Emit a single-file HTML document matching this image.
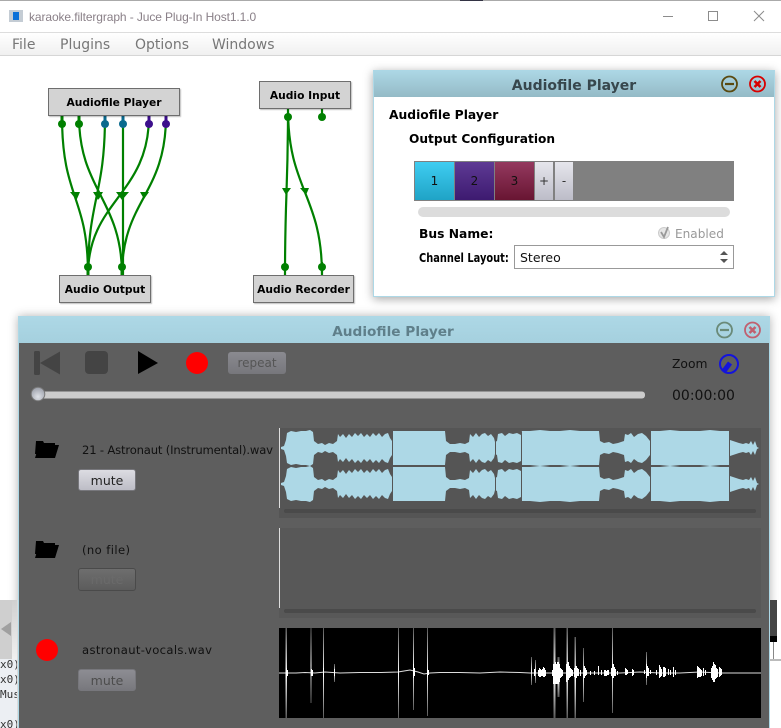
<!DOCTYPE html>
<html><head><meta charset="utf-8"><style>
html,body{margin:0;padding:0;background:#fff}
#p{position:relative;width:781px;height:728px;overflow:hidden;background:#fff;font-family:"DejaVu Sans","Liberation Sans",sans-serif}
.t{position:absolute;white-space:nowrap;line-height:1}
.b{position:absolute;box-sizing:border-box;text-align:center;white-space:nowrap}
.node{background:#d3d3d3;border:1px solid #6e6e6e;box-shadow:1px 1px 1px rgba(0,0,0,.25);font-weight:bold;font-size:10.7px;color:#000}
.mute{left:78px;width:58px;height:22px;border-radius:3px;font-size:12.5px;line-height:21px;border:1px solid #77777c}
svg{position:absolute;left:0;top:0}
</style></head><body><div id="p">
<div style="position:absolute;left:0;top:0;width:781px;height:1px;background:#aaa"></div>
<div style="position:absolute;left:460px;top:0;width:23px;height:1px;background:#334"></div>
<div style="position:absolute;left:0;top:32px;width:781px;height:24px;box-sizing:border-box;border-top:1px solid #ddd;border-bottom:1px solid #d6d6d6;background:linear-gradient(#fff,#f0f0f0)"></div>
<div class="t" style="left:29px;top:10px;font:12px 'Liberation Sans',sans-serif;color:#8a8088;letter-spacing:-.1px">karaoke.filtergraph - Juce Plug-In Host1.1.0</div>
<div class="t" style="left:12px;top:38px;font-size:14px;color:#777">File</div>
<div class="t" style="left:60px;top:38px;font-size:14px;color:#777">Plugins</div>
<div class="t" style="left:135px;top:38px;font-size:14px;color:#777">Options</div>
<div class="t" style="left:212px;top:38px;font-size:14px;color:#777">Windows</div>

<svg width="781" height="728" viewBox="0 0 781 728">
<rect x="9" y="10" width="14" height="12" fill="#c4ccd4"/><rect x="13" y="12" width="6" height="8" fill="#0a70d8"/>
<path d="M663 16.5h10M708.500 11.500h9v9h-9zM754 11l10 10M764 11l-10 10" fill="none" stroke="#8c8c8c"/>
<g fill="none" stroke="#008000" stroke-width="2.200">
<path d="M62 116C62 200 88 195 88 275M79 116C79 190 122 200 122 275M105 116C105 195 88 200 88 275M123 116V275M149 116C149 195 88 200 88 275M166 116C166 195 122 200 122 275"/>
<path d="M288 109C288 190 285 195 285 275M288 109C288 190 322 195 322 275M322 109V117M285 262V275M322 262V275"/>
</g>
<g fill="#008000">
<path d="M70 192h10l-3.500 8zM93 192h10l-5 8zM94 192h9l-4 7zM116 192h10l-4 8zM120 192h9l-6 7zM140 192h9l-5 7zM282 188h9l-5 7zM300 188h9l-3 7z"/>
<circle cx="62" cy="124" r="4"/><circle cx="79" cy="124" r="4"/>
<circle cx="88" cy="267" r="4"/><circle cx="122" cy="267" r="4"/>
<circle cx="288" cy="117" r="4"/><circle cx="322" cy="117" r="4"/><circle cx="285" cy="267" r="4"/><circle cx="322" cy="267" r="4"/>
</g>
<g fill="#0a6a8e"><rect x="103.500" y="116" width="3" height="8"/><rect x="121.500" y="116" width="3" height="8"/><circle cx="105" cy="124" r="4"/><circle cx="123" cy="124" r="4"/></g>
<g fill="#3c0f8c"><rect x="147.500" y="116" width="3" height="8"/><rect x="164.500" y="116" width="3" height="8"/><circle cx="149" cy="124" r="4"/><circle cx="166" cy="124" r="4"/></g>
<g fill="#008000"><rect x="60.500" y="116" width="3" height="8"/><rect x="77.500" y="116" width="3" height="8"/><rect x="86.500" y="267" width="3" height="8"/><rect x="120.500" y="267" width="3" height="8"/></g>
</svg>
<div class="b node" style="left:48px;top:88px;width:132px;height:28px;line-height:27.500px">Audiofile Player</div>
<div class="b node" style="left:259px;top:81px;width:92px;height:28px;line-height:27.500px">Audio Input</div>
<div class="b node" style="left:59px;top:275px;width:92px;height:28px;line-height:27.500px">Audio Output</div>
<div class="b node" style="left:253px;top:275px;width:101px;height:28px;line-height:27.500px">Audio Recorder</div>

<!-- plugin window -->
<div style="position:absolute;left:373px;top:70px;width:402px;height:227px;box-sizing:border-box;border:1px solid #add8e6;background:#fff;box-shadow:0 2px 9px rgba(0,0,0,.35)"></div>
<div style="position:absolute;left:374px;top:70px;width:400px;height:27px;background:linear-gradient(#add8e6,#94bac6)"></div>
<div class="t" style="left:374px;width:400px;text-align:center;top:79px;font-size:14px;font-weight:bold;color:#37474d">Audiofile Player</div>
<div class="t" style="left:389px;top:108.500px;font-size:12.300px;font-weight:bold;color:#000">Audiofile Player</div>
<div class="t" style="left:409px;top:132.500px;font-size:12.200px;font-weight:bold;color:#000">Output Configuration</div>
<div style="position:absolute;left:414px;top:161px;width:320px;height:40px;background:#808080"></div>
<div class="b" style="left:415px;top:162px;width:39px;height:38px;background:linear-gradient(#3fcdf1,#1fa3c6);font-size:12px;line-height:38px;color:#111">1</div>
<div class="b" style="left:455px;top:162px;width:39px;height:38px;background:linear-gradient(#5e3a94,#3d1a70);font-size:12px;line-height:38px;color:#111">2</div>
<div class="b" style="left:495px;top:162px;width:39px;height:38px;background:linear-gradient(#94395f,#681532);font-size:12px;line-height:38px;color:#111">3</div>
<div class="b" style="left:535px;top:162px;width:18px;height:38px;background:linear-gradient(#e6e6ec,#bcbcc8);font-size:12px;line-height:38px;color:#333">+</div>
<div class="b" style="left:555px;top:162px;width:18px;height:38px;background:linear-gradient(#e6e6ec,#bcbcc8);font-size:12px;line-height:38px;color:#333">-</div>
<div style="position:absolute;left:418px;top:207px;width:312px;height:10px;border-radius:5px;background:#dcdcdc"></div>
<div class="t" style="left:419px;top:228px;font-size:12.300px;font-weight:bold;color:#000">Bus Name:</div>
<div class="t" style="left:675px;top:228px;font-size:12.100px;color:#999">Enabled</div>
<div class="t" style="left:419px;top:252px;font-size:12px;font-weight:bold;color:#000;transform:scaleX(.82);transform-origin:0 0">Channel Layout:</div>
<div style="position:absolute;left:514px;top:245px;width:220px;height:24px;box-sizing:border-box;border:1px solid #999;background:#fff"></div>
<div class="t" style="left:520px;top:252px;font-size:12.500px;color:#111">Stereo</div>

<!-- audio window -->
<div style="position:absolute;left:18px;top:316px;width:752px;height:420px;box-sizing:border-box;border:1px solid #add8e6;background:#5e5e5e;box-shadow:0 0 9px rgba(0,0,0,.3)"></div>
<div style="position:absolute;left:19px;top:317px;width:750px;height:26px;background:linear-gradient(#add8e6,#a5d0de)"></div>
<div class="t" style="left:18px;width:750px;text-align:center;top:326px;font-size:13.700px;font-weight:bold;color:#5f7f8a">Audiofile Player</div>
<div class="b" style="left:228px;top:352px;width:58px;height:22px;border-radius:3px;background:linear-gradient(#8a8a90,#77777c);font-size:12px;line-height:23px;color:#555">repeat</div>
<div class="t" style="left:672px;top:358px;font-size:12.300px;color:#111">Zoom</div>
<div class="t" style="left:672px;top:389px;font-size:14px;color:#111">00:00:00</div>
<div class="t" style="left:82px;top:445px;font-size:11.600px;color:#111;letter-spacing:-.18px">21 - Astronaut (Instrumental).wav</div>
<div class="t" style="left:82px;top:545px;font-size:11.600px;color:#111;letter-spacing:.4px">(no file)</div>
<div class="t" style="left:82px;top:645px;font-size:11.600px;color:#111;letter-spacing:.35px">astronaut-vocals.wav</div>
<div class="b mute" style="top:469px;background:linear-gradient(#dcdce2,#bdbdc6);color:#222">mute</div>
<div class="b mute" style="top:568px;height:23px;background:linear-gradient(#6e6e6e,#5c5c5c);border-color:#4a4a4a;color:#6a6a6a">mute</div>
<div class="b mute" style="top:669px;background:linear-gradient(#8d8d93,#78787d);color:#4c4c4c">mute</div>

<!-- background leftovers -->
<div style="position:absolute;left:0;top:600px;width:12px;height:59px;background:#cfcfcf"></div>
<div style="position:absolute;left:12px;top:600px;width:5px;height:59px;background:linear-gradient(#d0d0d0,#f0f0f0)"></div>
<div style="position:absolute;left:0;top:659px;width:17px;height:69px;background:#eceff3;overflow:hidden;font:11px 'DejaVu Sans Mono',monospace;color:#333">
<div class="t" style="left:0;top:0">x0)</div><div class="t" style="left:0;top:15px">x0)</div><div class="t" style="left:0;top:30px">Mus</div><div class="t" style="left:0;top:60px">x0)</div></div>
<div style="position:absolute;left:770px;top:600px;width:11px;height:128px;background:#fff"></div>
<div style="position:absolute;left:770px;top:600px;width:7px;height:36px;background:#454545"></div>
<div style="position:absolute;left:770px;top:636px;width:7px;height:6px;background:#000"></div>
<div style="position:absolute;left:773px;top:642px;width:1px;height:17px;background:#888"></div>
<div style="position:absolute;left:770px;top:659px;width:11px;height:2px;background:#bbb"></div>

<svg width="781" height="728" viewBox="0 0 781 728">
<defs>
<linearGradient id="sp" x1="0" y1="0" x2="0" y2="1"><stop offset="0" stop-color="#fff" stop-opacity=".35"/><stop offset=".5" stop-color="#fff"/><stop offset="1" stop-color="#fff" stop-opacity=".35"/></linearGradient>
<radialGradient id="th" cx=".5" cy=".7" r=".7"><stop offset="0" stop-color="#dfe2e8"/><stop offset="1" stop-color="#9a9ea8"/></radialGradient>
<path id="h" d="M281 448L281 447 284 446 286 440 287 433 291 431 296 432 301 431 306 431 310 430 313 432 314 441 318 444 322 443 325 445 329 443 333 444 337 441 338 434 340 437 343 434 346 438 349 434 352 437 355 433 358 436 361 433 364 437 367 434 370 437 373 433 376 436 379 433 382 437 385 434 388 433 390 438 392 441 393 431 400 431 410 431 420 431 430 431 440 431 445 431 446 441 450 444 455 444 460 443 465 444 469 442 470 434 473 437 476 433 479 437 482 434 485 433 488 436 491 434 494 438 495 442 497 441 498 434 502 433 505 436 509 433 513 434 517 433 521 435 522 431 530 431 540 430 550 431 560 431 570 430 580 431 590 431 599 431 600 441 604 443 609 442 613 444 618 443 624 441 625 434 628 435 631 433 634 437 638 434 642 433 646 436 650 441 651 431 660 431 670 430 680 431 690 431 700 431 710 430 720 431 729 431 730 440 733 441 736 442 739 443 743 444 746 443 749 444 751 441 753 445 755 441 757 447 759 448Z"/>
</defs>
<!-- transport -->
<g fill="#444"><rect x="34" y="351" width="6" height="24" rx="1.500"/><path d="M40 363L60 351.500V374.500Z"/><rect x="85" y="351" width="23" height="23" rx="4"/></g>
<path d="M138 351L158 363 138 374Z" fill="#000"/>
<circle cx="197" cy="363" r="11" fill="#f00"/>
<rect x="38" y="391.500" width="607" height="7" rx="3" fill="#ccc"/>
<circle cx="38" cy="394" r="6.800" fill="url(#th)" stroke="#777"/>
<circle cx="729" cy="364" r="9" fill="none" stroke="#1414dc" stroke-width="2"/><path d="M730 363L724 371" stroke="#1414dc" stroke-width="5"/>
<!-- title buttons -->
<g fill="none" stroke-width="1.800"><circle cx="729.500" cy="84" r="7.500" stroke="#5a4a10"/><path d="M725 84h9" stroke="#5a4a10" stroke-width="2.200"/><circle cx="757.500" cy="84" r="7.500" stroke="#d80000"/><path d="M754.500 81l6 6M760.500 81l-6 6" stroke="#d80000" stroke-width="2.600"/></g>
<g fill="none" stroke-width="1.800"><circle cx="724.500" cy="330" r="7.500" stroke="#6a8a78"/><path d="M720 330h9" stroke="#6a8a78" stroke-width="2.200"/><circle cx="752.500" cy="330" r="7.500" stroke="#c06070"/><path d="M749.500 327l6 6M755.500 327l-6 6" stroke="#c06070" stroke-width="2.600"/></g>
<!-- check & combo arrows -->
<circle cx="664" cy="233" r="5.500" fill="#e6e6e6" stroke="#ccc"/><path d="M661 232l3 5 4-10" fill="none" stroke="#999" stroke-width="1.800"/>
<path d="M720 255l4-4 4 4zM720 259l4 4 4-4z" fill="#555"/>
<!-- folders -->
<g id="f"><path d="M36 441h7l1 2h11v2H40l-3 9h-2z" fill="#000"/><path d="M39 445h20l-4 13H35z" fill="#000"/></g>
<use href="#f" y="100"/>
<circle cx="47" cy="650" r="11" fill="#f00"/>
<path d="M11 622v14l-10-7z" fill="#a0a0a0"/>
<!-- waveforms -->
<rect x="279" y="428" width="482" height="90" fill="#555"/>
<rect x="279" y="528" width="482" height="90" fill="#585858"/>
<rect x="284" y="509" width="472" height="4" rx="2" fill="#4a4a4a"/>
<rect x="284" y="609" width="472" height="4" rx="2" fill="#4a4a4a"/>
<rect x="279" y="428" width="1" height="80" fill="#ddd"/>
<rect x="279" y="528" width="1" height="80" fill="#ddd"/>
<g fill="#add8e6">
<use href="#h"/><use href="#h" transform="matrix(1 0 0 -1 0 896)"/>
<use href="#h" transform="translate(0 36)"/><use href="#h" transform="matrix(1 0 0 -1 0 932)"/>
</g>
<path d="M392.500 430v74M495.500 430v74M521.500 432v70M650.500 430v74M729.500 430v74" stroke="#555" stroke-width="1"/>
<rect x="279" y="628" width="482" height="90" fill="#000"/>
<polyline points="279,673 285,673 296,673 305,672.500 315,673 325,672 340,673 360,672.500 380,672.500 398,672 404,671 410,670 418,672 424,674 430,673 440,672.500 460,672.500 480,673 500,672 520,672.500 530,673 535,673 600,673 620,673 640,672 660,673 680,673 700,672 720,673 761,673" fill="none" stroke="#ddd" stroke-width="1"/>
<g fill="url(#sp)">
<rect x="285.500" y="628" width="1.500" height="90"/><rect x="310.500" y="628" width="1" height="75"/><rect x="323" y="628" width="1" height="90"/><rect x="334" y="664" width="1" height="18"/>
<rect x="398" y="628" width="1" height="90"/><rect x="413" y="628" width="1" height="82"/><rect x="427" y="628" width="1" height="88"/>
<rect x="531" y="657" width="1" height="28"/><rect x="535" y="660" width="1" height="23"/>
<rect x="553.500" y="628" width="2" height="90"/><rect x="557.500" y="657" width="2" height="40"/><rect x="566.500" y="628" width="1.500" height="90"/>
<rect x="574.500" y="637" width="1.500" height="81"/><rect x="583" y="648" width="1" height="54"/><rect x="612" y="628" width="1" height="85"/>
<rect x="646" y="652" width="1" height="33"/>
</g>
<path transform="translate(.5 0)" d="M286 668v10M287 670v6M311 669v7M312 670v6M323 668v9M334 669v7M413 664v14M414 668v8M427 669v8M428 670v5M534 669v7M538 670v6M539 668v9M540 669v8M541 670v6M542 669v7M543 667v10M544 668v9M545 670v6M552 670v6M553 664v20M554 664v20M555 662v22M556 664v20M557 662v22M558 662v22M559 664v18M560 668v10M561 669v8M562 670v6M566 664v18M567 662v18M568 662v18M569 666v12M570 668v9M571 669v7M572 670v6M574 668v9M575 666v12M576 666v12M577 668v8M578 669v7M580 670v6M584 666v12M585 668v8M586 670v5M590 671v4M594 671v4M598 666v9M601 670v5M604 670v6M605 670v6M606 671v5M607 670v5M608 670v5M611 668v8M612 664v14M613 664v14M614 667v9M615 669v7M617 671v4M625 668v7M626 669v6M627 670v4M632 669v7M633 670v5M644 670v4M646 664v14M647 666v10M648 668v8M650 670v4M656 670v5M659 665v13M660 667v10M661 669v7M663 667v10M664 667v10M665 668v8M668 669v6M670 670v5M673 667v10M675 670v5M697 666v12M698 667v10M699 668v9M700 669v8M701 670v6M703 668v8M705 670v5M711 668v10M712 666v14M713 662v20M714 664v18M715 665v14M716 668v10M717 669v8M719 667v10M720 668v8M721 669v6" stroke="#fff" stroke-width="1" fill="none"/>
</svg>
</div></body></html>
